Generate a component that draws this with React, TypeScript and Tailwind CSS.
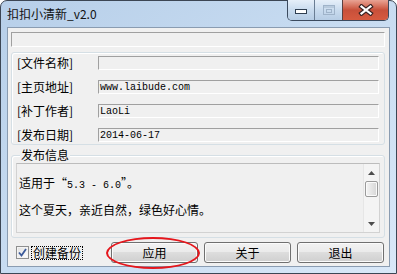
import React from "react";

const cjk = "font-['Noto_Sans_CJK_SC',sans-serif]";
const mono = "font-['Liberation_Mono','Noto_Sans_CJK_SC',monospace]";

interface FieldRowProps {
  label: string;
  value: string;
}

function FieldRow({ label, value }: FieldRowProps) {
  return (
    <div className="flex items-center h-[14px]">
      <div className={`w-[81px] text-[12px] leading-[12px] ${cjk}`}>{label}</div>
      <div
        className={`w-[281px] h-[14px] border-t border-l border-t-[#a0a0a0] border-l-[#a0a0a0] border-b border-r border-b-white border-r-white pl-px text-[10px] leading-[13px] ${mono}`}
      >
        {value}
      </div>
    </div>
  );
}

function CaptionButtons() {
  return (
    <div className="flex h-[21px] -mt-px mr-px rounded-b-[5px] border border-t-0 border-[#3b4a5e] overflow-hidden">
      <div className="w-[27px] flex items-center justify-center pt-[3px] bg-gradient-to-b from-[#e6eff9] via-[#c9dbee] to-[#b6cce4] border-r border-[#6a7d93]">
        <svg width="12" height="5">
          <rect x="0.5" y="0.5" width="11" height="4" fill="#fff" stroke="#2f3e50" />
        </svg>
      </div>
      <div className="w-[28px] flex items-center justify-center bg-gradient-to-b from-[#e6eff9] via-[#c9dbee] to-[#b6cce4] border-r border-[#5b4040]">
        <svg width="12" height="10">
          <rect x="0.5" y="0.5" width="11" height="9" fill="none" stroke="#9fb3c9" />
          <rect x="0.5" y="1.5" width="11" height="1" fill="#9fb3c9" />
          <rect x="3.5" y="4.5" width="5" height="3" fill="none" stroke="#9fb3c9" />
        </svg>
      </div>
      <div className="w-[45px] flex items-center justify-center bg-gradient-to-b from-[#e8a394] via-[#c8503a] to-[#d65a3f]">
        <svg width="16" height="12">
          <path d="M3.5 2.5 L12.5 9.5 M12.5 2.5 L3.5 9.5" stroke="#3b2424" strokeWidth="4.5" strokeLinecap="square" />
          <path d="M3.5 2.5 L12.5 9.5 M12.5 2.5 L3.5 9.5" stroke="#ffffff" strokeWidth="2.2" strokeLinecap="square" />
        </svg>
      </div>
    </div>
  );
}

function ScrollBar() {
  return (
    <div className="w-[16px] h-full flex flex-col border-l border-[#e6e6e6] bg-[#f4f4f4]">
      <div className="h-[17px] flex items-center justify-center">
        <svg width="7" height="4">
          <path d="M0 4 L3.5 0 L7 4 Z" fill="#4d4d4d" />
        </svg>
      </div>
      <div className="h-[16px] mx-px rounded-[2px] border border-[#9a9a9a] bg-gradient-to-r from-[#f4f4f4] to-[#d6d6d6] shadow-[inset_0_0_0_1px_#fafafa]" />
      <div className="flex-1" />
      <div className="h-[17px] flex items-center justify-center">
        <svg width="7" height="4">
          <path d="M0 0 L3.5 4 L7 0 Z" fill="#4d4d4d" />
        </svg>
      </div>
    </div>
  );
}

function Button({ label }: { label: string }) {
  return (
    <div
      className={`w-[87px] h-[21px] rounded-[3px] border border-[#707070] bg-[linear-gradient(#f2f2f2,#ebebeb_45%,#dddddd_50%,#cfcfcf)] shadow-[inset_0_0_0_1px_#fbfbfb] flex items-center justify-center text-[12px] leading-[12px] ${cjk}`}
    >
      {label}
    </div>
  );
}

export default function App() {
  return (
    <div className="relative w-[397px] h-[274px] overflow-hidden bg-white text-black">
      <div className="w-full h-full flex flex-col rounded-t-[7px] border border-[#3c4654] bg-gradient-to-br from-[#b7cfe9] via-[#c8dcf1] to-[#d9e8f8] px-[6px] pb-[6px]">
        <div className="h-[26px] flex justify-between">
          <div className={`mt-[7px] text-[12px] leading-[12px] text-[#111] ${cjk}`}>扣扣小清新_v2.0</div>
          <CaptionButtons />
        </div>

        <div className="flex-1 bg-[#f0f0f0] border border-[#8a9cb1] flex flex-col">
          <div className="ml-[3px] mt-[4px] w-[374px] h-[15px] border-t border-l border-t-[#a0a0a0] border-l-[#a0a0a0] border-b border-r border-b-white border-r-white" />

          <div className="ml-[3px] mt-[5px] w-[374px] h-[93px] rounded-[3px] border border-[#d5dfe5] shadow-[inset_1px_1px_0_#ffffff] pl-[5px] pt-[3px] flex flex-col gap-[10px]">
            <FieldRow label="[文件名称]" value="" />
            <FieldRow label="[主页地址]" value="www.laibude.com" />
            <FieldRow label="[补丁作者]" value="LaoLi" />
            <FieldRow label="[发布日期]" value="2014-06-17" />
          </div>

          <div className="relative ml-[3px] mt-[10px] w-[374px] h-[83px] rounded-[3px] border border-[#d5dfe5] shadow-[inset_1px_1px_0_#ffffff] pl-[4px] pt-[7px]">
            <span className={`absolute left-[8px] -top-[7px] px-px bg-[#f0f0f0] text-[12px] leading-[12px] ${cjk}`}>发布信息</span>
            <div className="w-[364px] h-[70px] border border-[#d2d2d2] border-t-[#bcbcbc] flex">
              <div className={`flex-1 pl-[2px] pt-[7px] text-[12px] leading-[24px] ${cjk}`}>
                <div>
                  适用于“<span className={`text-[10px] ${mono}`}>5.3 - 6.0</span>”。
                </div>
                <div>这个夏天，亲近自然，绿色好心情。</div>
              </div>
              <ScrollBar />
            </div>
          </div>

          <div className="mt-[4px] h-[21px] flex items-center">
            <div className="ml-[8px] w-[13px] h-[13px] border border-[#8e8f8f] bg-gradient-to-br from-[#e0e0e0] to-[#ffffff] shadow-[inset_0_0_0_1px_#f4f4f4] flex items-center justify-center">
              <svg width="9" height="9">
                <path d="M1 4.5 L3.5 7.5 L8 1" fill="none" stroke="#3b5a9a" strokeWidth="1.8" />
              </svg>
            </div>
            <div className={`ml-[2px] border border-dotted border-black px-px text-[12px] leading-[12px] ${cjk}`}>创建备份</div>
            <div className="ml-auto mr-[5px] flex gap-[6px]">
              <Button label="应用" />
              <Button label="关于" />
              <Button label="退出" />
            </div>
          </div>
        </div>
      </div>

      <div className="absolute left-[106px] top-[237px] w-[94px] h-[32px] rounded-[50%] border-2 border-[#e5161c]" />
    </div>
  );
}
